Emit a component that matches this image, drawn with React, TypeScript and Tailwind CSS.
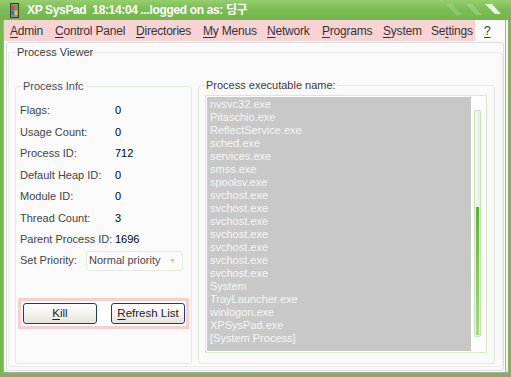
import React from "react";

const menu: { pre: string; u: string; post: string; w: string }[] = [
  { pre: "", u: "A", post: "dmin", w: "w-[45px]" },
  { pre: "", u: "C", post: "ontrol Panel", w: "w-[81px]" },
  { pre: "", u: "D", post: "irectories", w: "w-[67px]" },
  { pre: "", u: "M", post: "y Menus", w: "w-[64px]" },
  { pre: "", u: "N", post: "etwork", w: "w-[55px]" },
  { pre: "", u: "P", post: "rograms", w: "w-[61px]" },
  { pre: "", u: "S", post: "ystem", w: "w-[48px]" },
  { pre: "Se", u: "t", post: "tings", w: "w-[44px]" },
];

const rows: [string, string][] = [
  ["Flags:", "0"],
  ["Usage Count:", "0"],
  ["Process ID:", "712"],
  ["Default Heap ID:", "0"],
  ["Module ID:", "0"],
  ["Thread Count:", "3"],
  ["Parent Process ID:", "1696"],
];

const procs = [
  "nvsvc32.exe",
  "Pitaschio.exe",
  "ReflectService.exe",
  "sched.exe",
  "services.exe",
  "smss.exe",
  "spoolsv.exe",
  "svchost.exe",
  "svchost.exe",
  "svchost.exe",
  "svchost.exe",
  "svchost.exe",
  "svchost.exe",
  "svchost.exe",
  "System",
  "TrayLauncher.exe",
  "winlogon.exe",
  "XPSysPad.exe",
  "[System Process]",
];

function AppIcon() {
  return (
    <svg width="9" height="15" viewBox="0 0 9 15">
      <rect x="0" y="0" width="9" height="15" fill="#3a3a3a" />
      <rect x="1" y="1" width="7" height="13" fill="#8d8d8d" />
      <rect x="1.5" y="2.5" width="3" height="4.5" fill="#e8402a" />
      <rect x="4.5" y="2.5" width="3" height="4.5" fill="#4cb040" />
      <rect x="1.5" y="7.5" width="3" height="4.5" fill="#2f6fd8" />
      <rect x="4.5" y="7.5" width="3" height="4.5" fill="#f0c020" />
    </svg>
  );
}

export default function App() {
  return (
    <div className="w-[511px] h-[377px] overflow-hidden flex flex-col bg-[#76b94f] font-['Liberation_Sans',Arial,sans-serif]">
      {/* Title bar */}
      <div className="relative h-[20px] shrink-0 flex items-center bg-[linear-gradient(to_bottom,#94d06e,#7bbd55_45%,#72b64b)]">
        <div className="ml-[10px] w-[9px] h-[15px] flex">
          <AppIcon />
        </div>
        <span className="ml-[8px] text-white font-bold text-[12px] tracking-[-0.35px] whitespace-pre leading-none font-['Liberation_Sans','Noto_Sans_CJK_KR',sans-serif]">
          XP SysPad  18:14:04 ...logged on as: 딩구
        </span>
        <svg className="absolute right-[9px] top-[3px]" width="56" height="14" viewBox="0 0 56 14">
          <polygon points="0,1 6,1 16,12 10,12" fill="#ffffff" opacity="0.16" />
          <polygon points="20,1 26,1 36,12 30,12" fill="#ffffff" opacity="0.2" />
          <polygon points="39,1 46,1 55,11 49,11" fill="#ffffff" opacity="0.85" />
        </svg>
      </div>

      {/* Body */}
      <div className="flex-1 flex pl-[3px] pr-[3px] pb-[4px]">
        <div className="flex-1 flex flex-col bg-[#fafafa] border-l border-b border-[#a9a9a9] shadow-[inset_-2px_0_0_#f3f3f3,inset_-3px_0_0_#a9a9a9]">
          {/* Menu bar */}
          <div className="h-[21px] shrink-0 flex items-center text-[12px] text-[#333] tracking-[-0.2px]">
            <div className="w-[471px] h-[21px] bg-[#f9d3d3] flex items-center pl-[6px]">
              {menu.map((m, i) => (
                <span key={i} className={`${m.w} shrink-0 whitespace-pre`}>
                  {m.pre}
                  <span className="underline underline-offset-[2px]">{m.u}</span>
                  {m.post}
                </span>
              ))}
            </div>
            <span className="ml-[9px] underline underline-offset-[2px]">?</span>
          </div>

          {/* Panel */}
          <div className="ml-[2px] mt-[1px] w-[498px] h-[329px] border border-[#dedede] rounded-[3px]">
            <fieldset className="ml-[1px] mt-[3px] w-[495px] h-[321px] border border-[#ebeee8] rounded-[3px] p-0">
              <legend className="ml-[7px] px-[1px] text-[11px] leading-[13px] text-[#3a3a3a]">Process Viewer</legend>
              <div className="flex gap-[6px] ml-[6px] mt-[21px]">
                {/* Process Info */}
                <fieldset className="w-[177px] h-[284px] border border-[#e3ecdb] rounded-[3px] p-0">
                  <legend className="ml-[6px] px-[1px] text-[11px] leading-[13px] text-[#4a4a4a]">Process Infc</legend>
                  <div className="mt-[7px] px-[4px] text-[11px]">
                    {rows.map(([k, v], i) => (
                      <div key={i} className="h-[21.43px] flex items-center">
                        <span className="w-[95px] text-[#444]">{k}</span>
                        <span className="text-black">{v}</span>
                      </div>
                    ))}
                    <div className="h-[21.43px] flex items-center">
                      <span className="w-[66px] text-[#444]">Set Priority:</span>
                      <div className="w-[97px] h-[20px] border border-[#e2eedb] rounded-[3px] flex items-center pl-[2px] pr-[7px] bg-[#fbfbfb]">
                        <span className="flex-1 text-[#4a4a4a]">Normal priority</span>
                        <svg width="5" height="4" viewBox="0 0 5 4">
                          <polygon points="0,0 5,0 2.5,4" fill="#b4dba4" />
                        </svg>
                      </div>
                    </div>
                  </div>
                  <div className="ml-[2px] mt-[27px] w-[171px] h-[31px] border-[3px] border-[#f7cfcf] bg-white flex items-center pl-[2px] gap-[14px]">
                    <button className="w-[74px] h-[21px] border border-[#1f3d6b] rounded-[3px] bg-[linear-gradient(to_bottom,#ffffff,#f3f1ec_60%,#e6e3dc)] text-[11.5px] text-[#222]">
                      <span className="underline underline-offset-[2px]">K</span>ill
                    </button>
                    <button className="w-[74px] h-[21px] border border-[#1f3d6b] rounded-[3px] bg-[linear-gradient(to_bottom,#ffffff,#f3f1ec_60%,#e6e3dc)] text-[11.5px] text-[#222]">
                      <span className="underline underline-offset-[2px]">R</span>efresh List
                    </button>
                  </div>
                </fieldset>

                {/* Executable names */}
                <fieldset className="w-[297px] h-[285px] border border-[#e3ecdb] rounded-[3px] p-0 -mt-[1px]">
                  <legend className="ml-[6px] px-[1px] text-[11px] leading-[13px] text-[#3a3a3a]">Process executable name:</legend>
                  <div className="ml-[6px] mt-[3px] w-[282px] h-[258px] border border-[#d9eacc] flex bg-white">
                    <div className="ml-[1px] mt-[1px] w-[264px] h-[254px] bg-[#c8c8c8] pl-[3px] pt-[0.5px] text-[11px] leading-[13px] text-[#f6f6f6]">
                      {procs.map((p, i) => (
                        <div key={i} className="whitespace-pre">{p}</div>
                      ))}
                    </div>
                    <div className="ml-[3px] mt-[14px] w-[7px] h-[227px] border border-[#c6e3b0] rounded-[2px] bg-[linear-gradient(to_right,#f6f6f6,#e9e9e9)] flex flex-col">
                      <div className="ml-[1px] mt-[96px] w-[3px] h-[128px] bg-[linear-gradient(to_bottom,#5fae3e,#7cc058_40%,#a6d987)]" />
                    </div>
                  </div>
                </fieldset>
              </div>
            </fieldset>
          </div>
        </div>
      </div>
    </div>
  );
}
